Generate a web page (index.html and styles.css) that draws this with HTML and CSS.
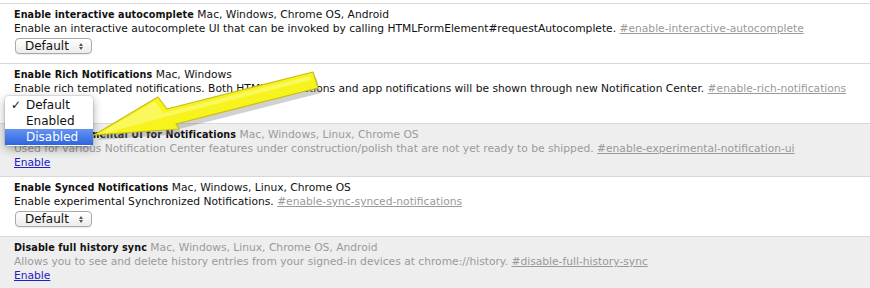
FILE: index.html
```html
<!DOCTYPE html>
<html lang="en">
<head>
  <meta charset="UTF-8">
  <title>Experiments</title>
  <link rel="stylesheet" href="styles.css">
</head>
<body>
  <div class="page">
    <div class="experiments">

      <div class="experiment">
        <div class="title"><b>Enable interactive autocomplete</b> <span class="platforms">Mac, Windows, Chrome OS, Android</span></div>
        <div class="desc">Enable an interactive autocomplete UI that can be invoked by calling HTMLFormElement#requestAutocomplete. <a class="permalink" href="#">#enable-interactive-autocomplete</a></div>
        <div class="popup-button">Default<span class="updown"></span></div>
      </div>

      <div class="experiment">
        <div class="title"><b>Enable Rich Notifications</b> <span class="platforms">Mac, Windows</span></div>
        <div class="desc">Enable rich templated notifications. Both HTML notifications and app notifications will be shown through new Notification Center. <a class="permalink" href="#">#enable-rich-notifications</a></div>
        <div class="popup-button">Default<span class="updown"></span></div>
      </div>

      <div class="experiment disabled">
        <div class="title"><b>Enable Experimental UI for Notifications</b> <span class="platforms">Mac, Windows, Linux, Chrome OS</span></div>
        <div class="desc">Used for various Notification Center features under construction/polish that are not yet ready to be shipped. <a class="permalink" href="#">#enable-experimental-notification-ui</a></div>
        <a class="toggle" href="#">Enable</a>
      </div>

      <div class="experiment">
        <div class="title"><b>Enable Synced Notifications</b> <span class="platforms">Mac, Windows, Linux, Chrome OS</span></div>
        <div class="desc">Enable experimental Synchronized Notifications. <a class="permalink" href="#">#enable-sync-synced-notifications</a></div>
        <div class="popup-button">Default<span class="updown"></span></div>
      </div>

      <div class="experiment disabled">
        <div class="title"><b>Disable full history sync</b> <span class="platforms">Mac, Windows, Linux, Chrome OS, Android</span></div>
        <div class="desc">Allows you to see and delete history entries from your signed-in devices at chrome://history. <a class="permalink" href="#">#disable-full-history-sync</a></div>
        <a class="toggle" href="#">Enable</a>
      </div>

    </div>

    <!-- open popup menu of the rich notifications select -->
    <ul class="menu">
      <li class="checked">Default</li>
      <li>Enabled</li>
      <li class="active">Disabled</li>
    </ul>

    <!-- annotation arrow -->
    <svg class="arrow" width="870" height="288" viewBox="0 0 870 288">
      <polygon points="94,135 158,97 167,109 313,72 318,88 176,124 179,129" fill="#7a7a7a" opacity="0.35" transform="translate(3 5)"/>
      <polygon points="94,135 158,97 167,109 313,72 318,88 176,124 179,129" fill="#f7f31d" stroke="#c6be12" stroke-width="1.2" stroke-linejoin="round"/>
      <polygon points="102,132 155,101 163,113 310,76 311,80 165,117 106,133" fill="#fdfb90" opacity="0.55"/>
    </svg>
  </div>
</body>
</html>
```

FILE: styles.css
```css
* {
  box-sizing: border-box;
  margin: 0;
  padding: 0;
}

body {
  font-family: 'DejaVu Sans', Verdana, sans-serif;
  font-size: 10.7px;
  line-height: 14px;
  color: #111;
  background: #fff;
}

.page {
  position: relative;
  width: 870px;
  height: 288px;
  overflow: hidden;
  padding-top: 3px;
}

/* Experiment rows */
.experiment {
  border-top: 1px solid #d9d9d9;
  padding: 4px 14px 6px;
  white-space: nowrap;
}

.experiment.disabled {
  background: #eeeeee;
}

.experiment.disabled .platforms,
.experiment.disabled .desc {
  color: #9a9a9a;
}

.title b {
  font-family: 'DejaVu Sans Condensed', 'DejaVu Sans', sans-serif;
  font-weight: bold;
  letter-spacing: 0.1px;
}

.permalink {
  color: #999;
  text-decoration: underline;
}

.toggle {
  color: #2020c8;
  text-decoration: underline;
}

/* Mac style popup button */
.popup-button {
  position: relative;
  width: 77px;
  height: 16px;
  margin: 2px 0 3px 1px;
  padding-left: 9px;
  border: 1px solid #a9a9a9;
  border-radius: 4px;
  background: linear-gradient(#ffffff, #ececec);
  box-shadow: 0 1px 1px rgba(0, 0, 0, 0.08);
  font-size: 12px;
  line-height: 14px;
}

.updown {
  position: absolute;
  right: 8px;
  top: 4px;
  width: 0;
  height: 0;
  border-left: 2px solid transparent;
  border-right: 2px solid transparent;
  border-bottom: 3px solid #555;
}

.updown::after {
  content: '';
  position: absolute;
  left: -2px;
  top: 4px;
  border-left: 2px solid transparent;
  border-right: 2px solid transparent;
  border-top: 3px solid #555;
}

/* Open menu */
.menu {
  position: absolute;
  left: 5px;
  top: 96px;
  width: 88px;
  padding: 1px 0;
  list-style: none;
  background: #fff;
  border-radius: 4px;
  box-shadow: 0 3px 10px rgba(0, 0, 0, 0.35), 0 0 0 1px rgba(0, 0, 0, 0.08);
  font-size: 12px;
}

.menu li {
  height: 16px;
  line-height: 16px;
  padding-left: 21px;
  position: relative;
}

.menu li.checked::before {
  content: '\2713';
  position: absolute;
  left: 6px;
  font-size: 12px;
  font-weight: bold;
}

.menu li.active {
  background: linear-gradient(#6494f2, #2f64de);
  color: #fff;
}

.arrow {
  position: absolute;
  left: 0;
  top: 0;
  pointer-events: none;
}
```
